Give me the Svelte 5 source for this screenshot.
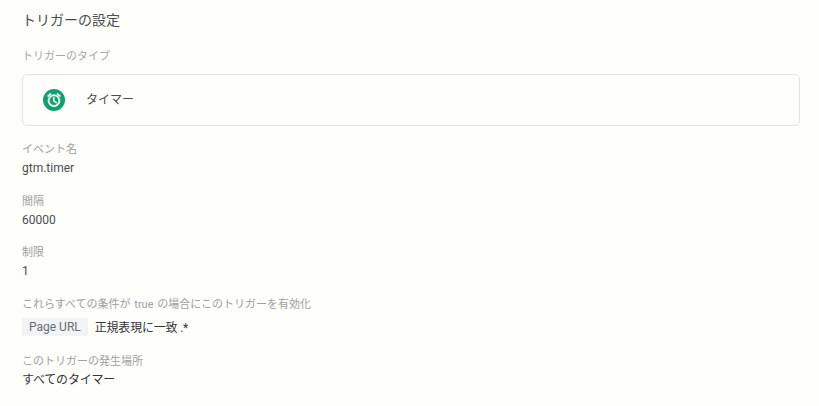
<script>
  const fields = [
    { label: 'イベント名', value: 'gtm.timer' },
    { label: '間隔', value: '60000' },
    { label: '制限', value: '1' }
  ];
</script>

<main class="page">
  <h1 class="title">トリガーの設定</h1>
  <div class="type-label">トリガーのタイプ</div>
  <div class="card">
    <span class="badge">
      <svg viewBox="0 0 24 24" width="16" height="16" aria-hidden="true">
        <path fill="#fff" stroke="#fff" stroke-width="0.7" d="M22 5.72l-4.6-3.86-1.29 1.53 4.6 3.86L22 5.72zM7.88 3.39L6.6 1.86 2 5.71l1.29 1.53 4.59-3.85zM12.5 8H11v6l4.75 2.85.75-1.23-4-2.37V8zM12 4c-4.97 0-9 4.03-9 9s4.03 9 9 9 9-4.03 9-9-4.03-9-9-9zm0 16c-3.87 0-7-3.13-7-7s3.13-7 7-7 7 3.13 7 7-3.13 7-7 7z"/>
      </svg>
    </span>
    <span class="card-name">タイマー</span>
  </div>

  {#each fields as f}
    <section class="field">
      <div class="label">{f.label}</div>
      <div class="value">{f.value}</div>
    </section>
  {/each}

  <section class="cond">
    <div class="label wide">これらすべての条件が true の場合にこのトリガーを有効化</div>
    <div class="cond-row">
      <span class="chip">Page URL</span>
      <span class="cond-text">正規表現に一致 .*</span>
    </div>
  </section>

  <section class="where">
    <div class="label">このトリガーの発生場所</div>
    <div class="where-value">すべてのタイマー</div>
  </section>
</main>

<style>
  :global(body) {
    margin: 0;
    background: #fefefb;
  }
  .page {
    box-sizing: border-box;
    height: 406px;
    padding: 10px 19px 0 22px;
    overflow: hidden;
    font-family: Roboto, "Noto Sans CJK JP", sans-serif;
    background: #fefefb;
  }
  .title {
    margin: 0;
    font-size: 14px;
    font-weight: 400;
    line-height: 20px;
    color: #4a4d50;
  }
  .type-label {
    margin-top: 18px;
    font-size: 11px;
    line-height: 18px;
    color: #a8a8a6;
  }
  .card {
    box-sizing: border-box;
    display: flex;
    align-items: center;
    height: 52px;
    margin-top: 8px;
    border: 1px solid #e2e4e3;
    border-radius: 5px;
  }
  .badge {
    display: flex;
    align-items: center;
    justify-content: center;
    width: 22px;
    height: 22px;
    margin-left: 20px;
    border-radius: 50%;
    background: #129e6f;
  }
  .card-name {
    margin-left: 21px;
    margin-bottom: 3px;
    font-size: 12px;
    color: #4a4d50;
  }
  .field {
    height: 51.5px;
  }
  .field:first-of-type {
    margin-top: 15px;
  }
  .label {
    font-size: 11px;
    line-height: 17px;
    color: #a0a09e;
  }
  .wide {
    word-spacing: 1px;
  }
  .value {
    font-size: 12px;
    line-height: 18px;
    margin-top: 1px;
    color: #4a4d50;
  }
  .cond-row {
    display: flex;
    align-items: center;
    gap: 7px;
    margin-top: 5px;
  }
  .chip {
    padding: 0 7px;
    height: 18px;
    line-height: 18px;
    font-size: 12px;
    border-radius: 2px;
    color: #6a6e72;
    background: #f1f3f4;
  }
  .cond-text {
    font-size: 12px;
    letter-spacing: -0.2px;
    color: #33353a;
  }
  .where {
    margin-top: 17px;
  }
  .where-value {
    font-size: 12px;
    line-height: 18px;
    margin-top: 1px;
    letter-spacing: -0.2px;
    color: #33353a;
  }
</style>
